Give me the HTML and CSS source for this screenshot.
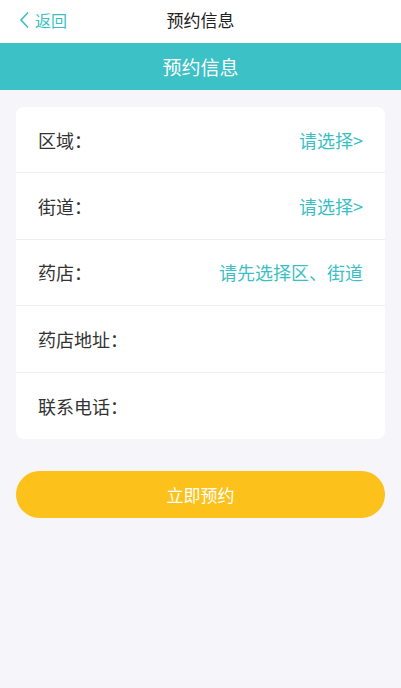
FILE: index.html
```html
<!DOCTYPE html>
<html lang="zh-CN">
<head>
    <meta charset="UTF-8">
    <meta name="viewport" content="width=device-width, initial-scale=1.0">
    <title>预约信息</title>
    <link rel="stylesheet" href="styles.css">
</head>
<body>
    <div class="nav">
        <a class="back" href="#">
            <svg width="11" height="18" viewBox="0 0 11 18"><path d="M9 1.5 L2 9 L9 16.5" fill="none" stroke="#3bbfc4" stroke-width="1.6"/></svg>
            <span>返回</span>
        </a>
        <div class="nav-title">预约信息</div>
    </div>
    <div class="banner">预约信息</div>

    <div class="card">
        <div class="row">
            <span class="label">区域：</span>
            <span class="value">请选择&gt;</span>
        </div>
        <div class="row">
            <span class="label">街道：</span>
            <span class="value">请选择&gt;</span>
        </div>
        <div class="row">
            <span class="label">药店：</span>
            <span class="value">请先选择区、街道</span>
        </div>
        <div class="row">
            <span class="label">药店地址：</span>
        </div>
        <div class="row">
            <span class="label">联系电话：</span>
        </div>
    </div>

    <button class="submit" type="button">立即预约</button>
</body>
</html>
```

FILE: styles.css
```css
body {
    margin: 0;
    padding: 0;
    background-color: #f6f5fa;
    font-family: 'Noto Sans CJK SC', 'Noto Sans', sans-serif;
    color: #333;
}

.nav {
    position: relative;
    height: 43px;
    background-color: white;
    display: flex;
    align-items: center;
    justify-content: center;
}

.back {
    position: absolute;
    left: 19px;
    top: 11px;
    display: flex;
    align-items: center;
    gap: 5px;
    color: #3bbfc4;
    text-decoration: none;
    font-size: 16px;
    line-height: 18px;
}

.nav-title {
    font-size: 17px;
    color: #222;
    margin-top: -5px;
}

.banner {
    height: 47px;
    line-height: 47px;
    background-color: #3cc1c7;
    color: white;
    text-align: center;
    font-size: 19px;
}

.card {
    margin: 17px 16px 0;
    background-color: white;
    border-radius: 8px;
    overflow: hidden;
}

.row {
    height: 65.4px;
    padding: 0 22px;
    display: flex;
    align-items: center;
    justify-content: space-between;
    border-bottom: 1px solid #efeff3;
    font-size: 18px;
}

.row:last-child {
    height: 66.4px;
    border-bottom: none;
}

.value {
    color: #3bbfc4;
}

.submit {
    display: block;
    width: 369px;
    height: 47px;
    margin: 32px 16px 0;
    border: none;
    border-radius: 24px;
    background-color: #fcc11a;
    color: white;
    font-family: inherit;
    font-size: 17px;
    cursor: pointer;
}
```
